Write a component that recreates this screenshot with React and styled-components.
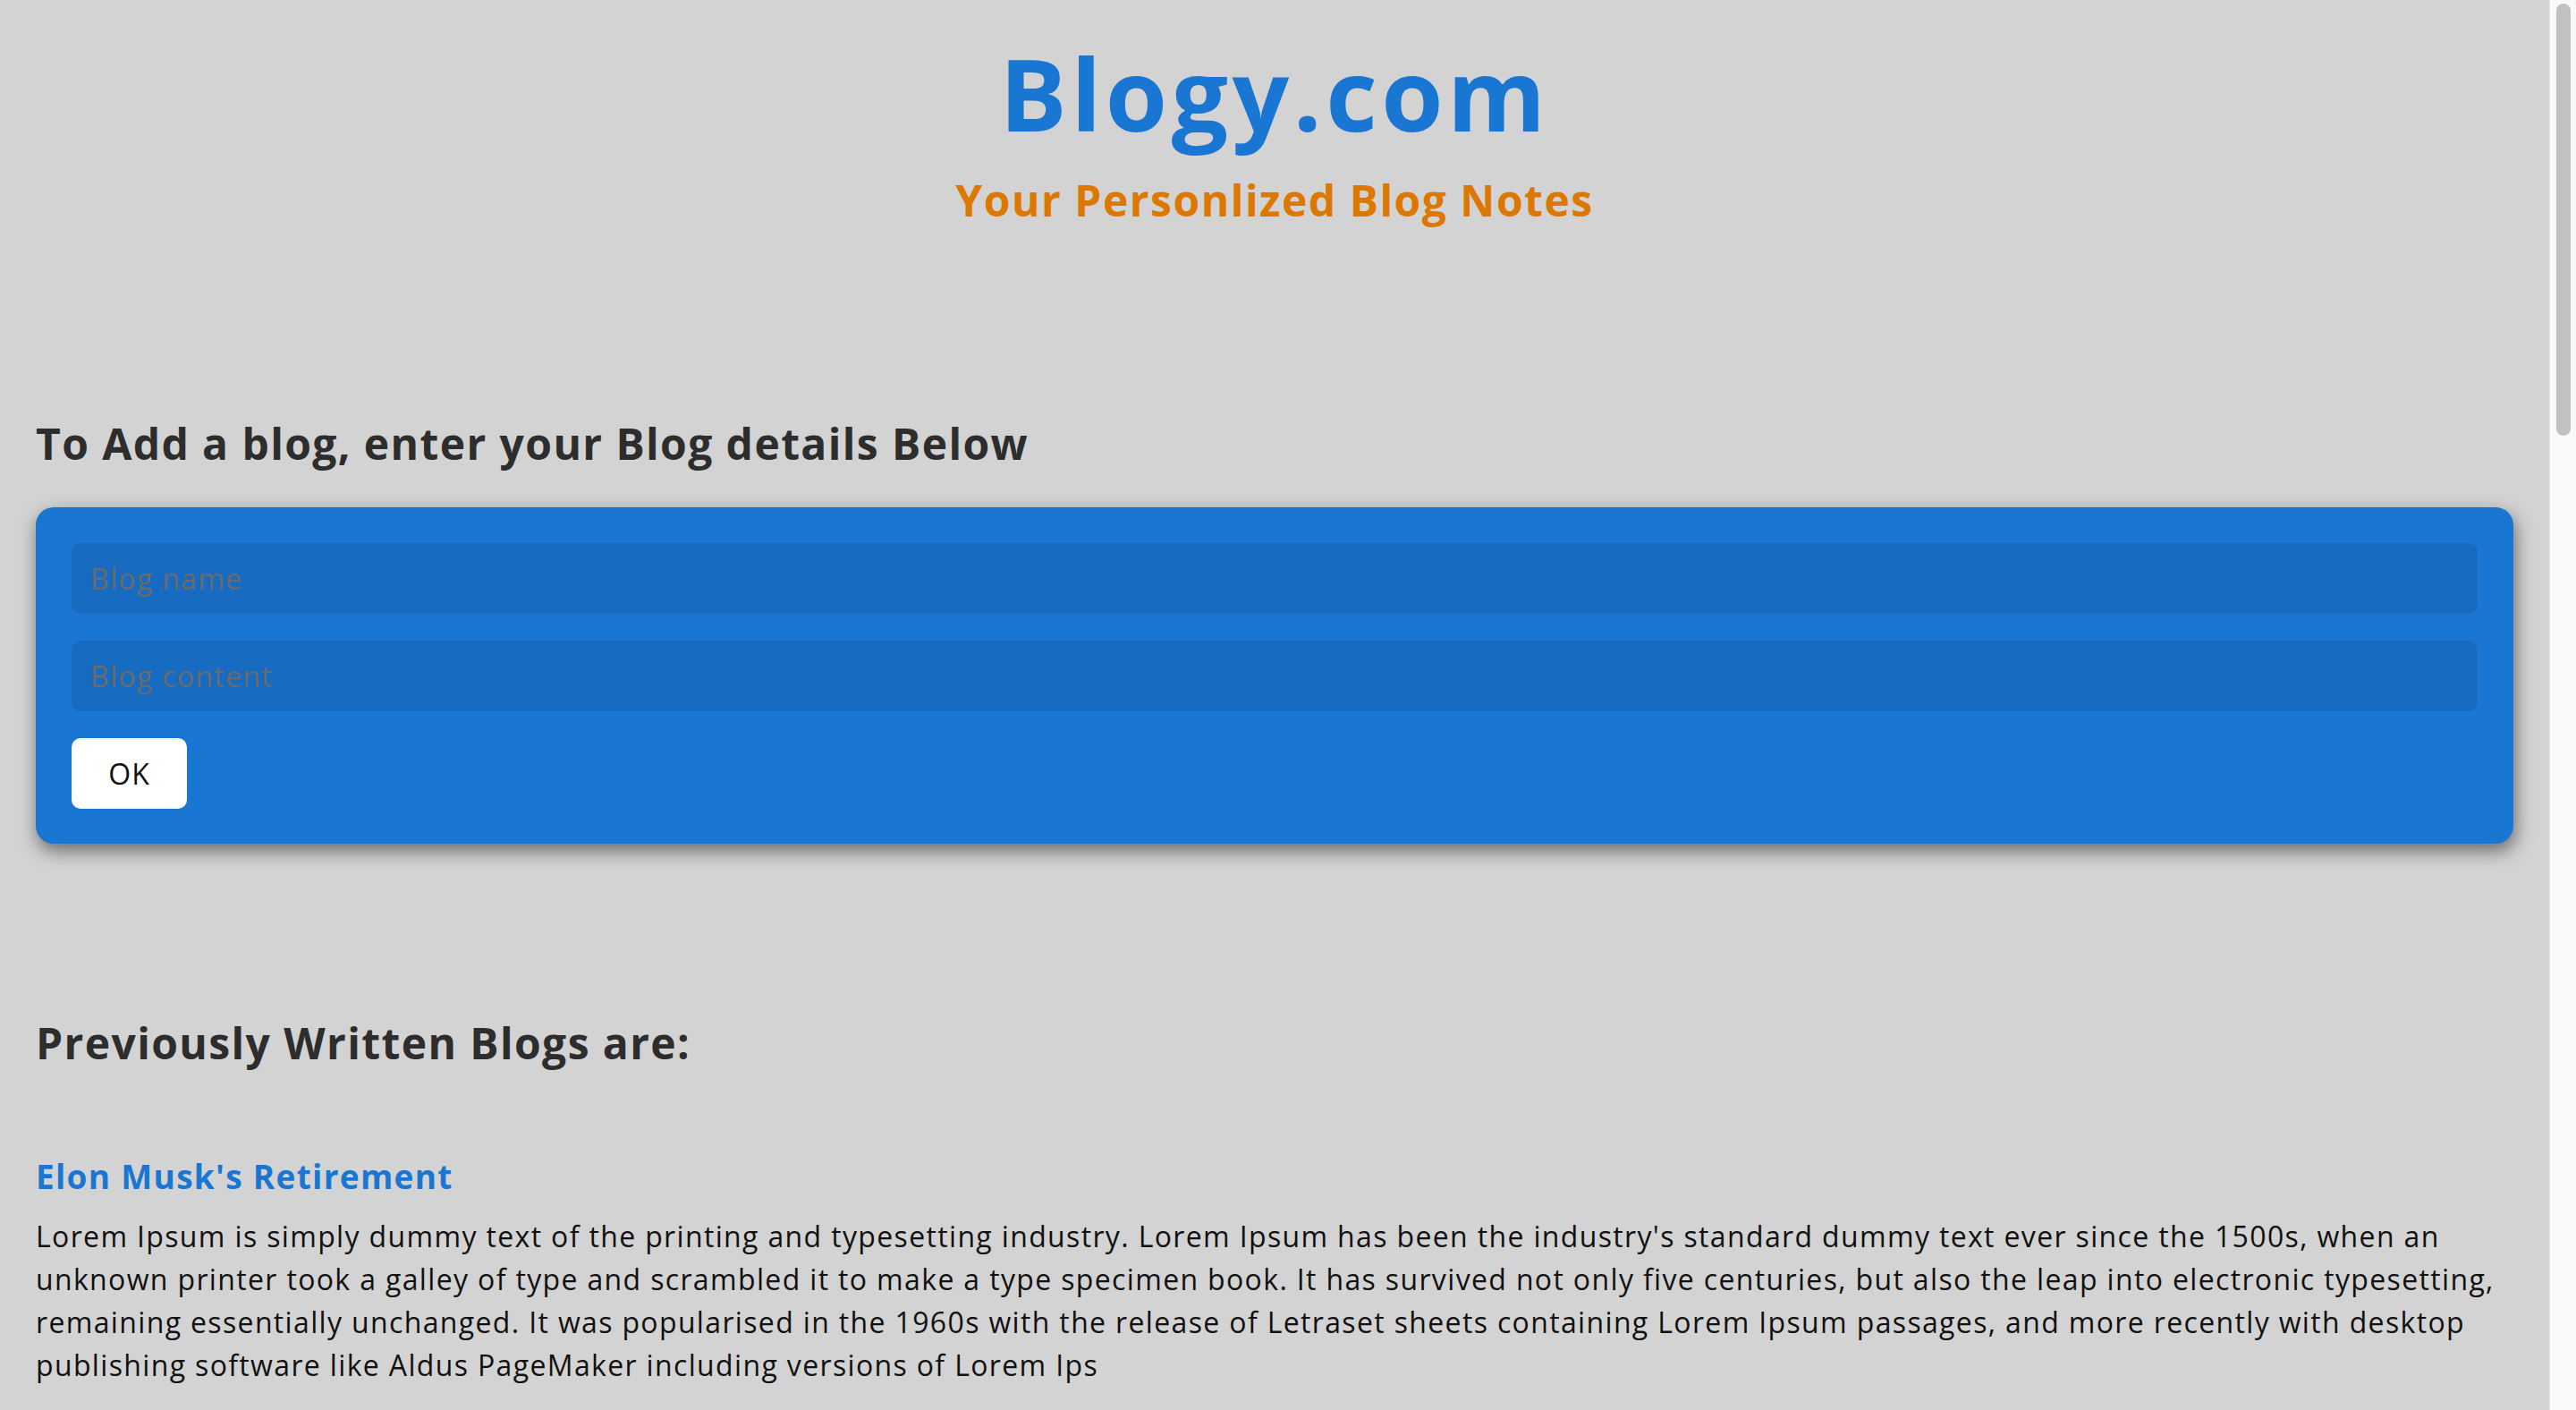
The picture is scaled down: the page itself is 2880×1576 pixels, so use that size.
import React, { useState } from "react";
import styled, { createGlobalStyle } from "styled-components";

const loremText =
  "Lorem Ipsum is simply dummy text of the printing and typesetting industry. Lorem Ipsum has been the industry's standard dummy text ever since the 1500s, when an unknown printer took a galley of type and scrambled it to make a type specimen book. It has survived not only five centuries, but also the leap into electronic typesetting, remaining essentially unchanged. It was popularised in the 1960s with the release of Letraset sheets containing Lorem Ipsum passages, and more recently with desktop publishing software like Aldus PageMaker including versions of Lorem Ips";

// Saved blogs shown under the form
const initialBlogs = [
  { id: 1, name: "Elon Musk's Retirement", content: loremText },
  { id: 2, name: "A Weekend in the Mountains", content: loremText },
  { id: 3, name: "Learning React the Hard Way", content: loremText },
  { id: 4, name: "Why I Switched to Tea", content: loremText },
  { id: 5, name: "Notes on Remote Work", content: loremText },
  { id: 6, name: "My First Marathon", content: loremText },
  { id: 7, name: "Cooking for One", content: loremText },
  { id: 8, name: "Books I Read This Year", content: loremText },
  { id: 9, name: "The Best Coffee in Town", content: loremText },
  { id: 10, name: "Gardening Basics", content: loremText },
  { id: 11, name: "Travel Packing List", content: loremText },
];

const App = () => {
  const [blogs, setBlogs] = useState(initialBlogs);
  const [name, setName] = useState("");
  const [content, setContent] = useState("");

  const handleAdd = () => {
    if (!name || !content) return;
    setBlogs([{ id: Date.now(), name, content }, ...blogs]);
    setName("");
    setContent("");
  };

  return (
    <>
      <GlobalStyle />
      <Page>
        <Header>
          <Logo>Blogy.com</Logo>
          <Tagline>Your Personlized Blog Notes</Tagline>
        </Header>

        <SectionTitle>To Add a blog, enter your Blog details Below</SectionTitle>
        <FormCard>
          <Field
            type="text"
            placeholder="Blog name"
            value={name}
            onChange={e => setName(e.target.value)}
          />
          <Field
            type="text"
            placeholder="Blog content"
            value={content}
            onChange={e => setContent(e.target.value)}
          />
          <OkButton onClick={handleAdd}>OK</OkButton>
        </FormCard>

        <SectionTitle $top={194}>Previously Written Blogs are:</SectionTitle>
        <BlogList>
          {blogs.map(blog => (
            <BlogItem key={blog.id}>
              <BlogName>{blog.name}</BlogName>
              <BlogText>{blog.content}</BlogText>
            </BlogItem>
          ))}
        </BlogList>
      </Page>

      {/* page scrollbar as drawn in the screenshot */}
      <ScrollTrack>
        <ScrollThumb />
      </ScrollTrack>
    </>
  );
};

export default App;

const GlobalStyle = createGlobalStyle`
  html, body {
    margin: 0;
    padding: 0;
    background: #d3d3d3;
    font-family: "Open Sans", "Liberation Sans", sans-serif;
  }
`;

const Page = styled.div`
  padding: 37px 70px 80px 40px;
  box-sizing: border-box;
`;

const Header = styled.header`
  display: flex;
  flex-direction: column;
  align-items: center;
`;

const Logo = styled.h1`
  margin: 0;
  font-size: 112px;
  line-height: 134px;
  font-weight: 700;
  letter-spacing: 4.5px;
  color: #1976d2;
`;

const Tagline = styled.div`
  margin-top: 24px;
  font-size: 48px;
  line-height: 1.2;
  font-weight: 700;
  letter-spacing: 1.5px;
  color: #dc7800;
`;

const SectionTitle = styled.h2`
  margin: ${({ $top }) => ($top ? $top : 214)}px 0 0 0;
  font-size: 48px;
  line-height: 1.2;
  font-weight: 700;
  letter-spacing: 1.4px;
  color: #2d2d2d;
`;

const FormCard = styled.div`
  margin-top: 43px;
  background: #1976d2;
  border-radius: 20px;
  padding: 40px 40px 39px 40px;
  display: flex;
  flex-direction: column;
  align-items: flex-start;
  gap: 30px;
  box-shadow: 2px 8px 20px rgba(0, 0, 0, 0.5);
`;

const Field = styled.input`
  width: 100%;
  height: 79px;
  box-sizing: border-box;
  padding: 0 21px;
  border: none;
  border-radius: 10px;
  background: rgba(0, 0, 0, 0.08);
  font-family: inherit;
  font-size: 32px;
  letter-spacing: 1.3px;
  color: #222;
  outline: none;
  &::placeholder {
    color: #6a6a6a;
  }
`;

const OkButton = styled.button`
  width: 129px;
  height: 79px;
  border: none;
  border-radius: 10px;
  background: #fff;
  font-family: inherit;
  font-size: 32px;
  letter-spacing: 1px;
  color: #111;
  cursor: pointer;
`;

const BlogList = styled.div`
  margin-top: 98px;
  display: flex;
  flex-direction: column;
  gap: 80px;
`;

const BlogItem = styled.article`
  display: flex;
  flex-direction: column;
  gap: 21px;
`;

const BlogName = styled.h3`
  margin: 0;
  font-size: 37px;
  line-height: 1.2;
  font-weight: 700;
  letter-spacing: 1.3px;
  color: #1976d2;
`;

const BlogText = styled.p`
  margin: 0;
  font-size: 32px;
  line-height: 48px;
  letter-spacing: 1.35px;
  color: #111;
`;

const ScrollTrack = styled.div`
  position: fixed;
  top: 0;
  right: 0;
  width: 29px;
  height: 100vh;
  background: #f9f9f9;
  border-left: 1px solid #e6e6e6;
  display: flex;
  justify-content: center;
`;

const ScrollThumb = styled.div`
  margin-top: 4px;
  width: 16px;
  height: 483px;
  border-radius: 8px;
  background: #c1c1c1;
`;
